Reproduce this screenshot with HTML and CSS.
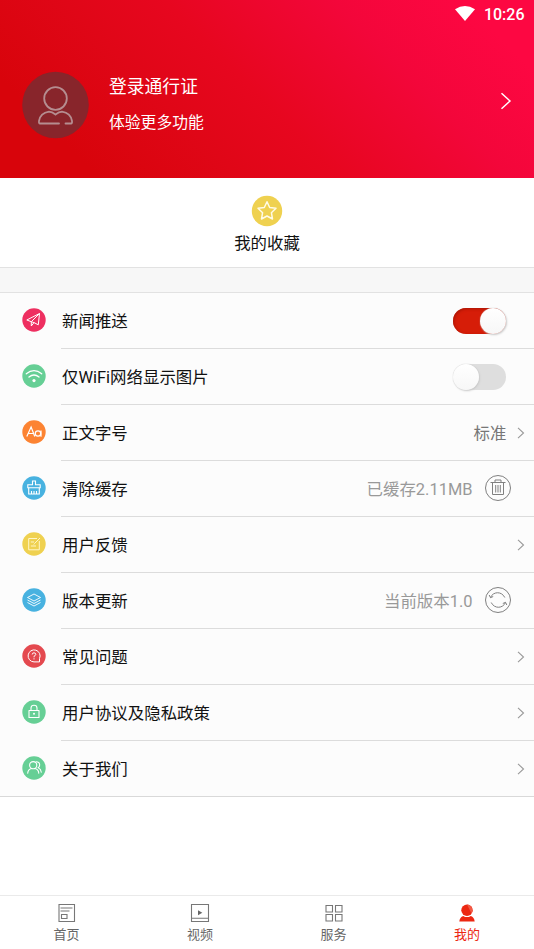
FILE: index.html
```html
<!DOCTYPE html>
<html lang="zh-CN">
<head>
<meta charset="utf-8">
<title>我的</title>
<link rel="stylesheet" href="styles.css">
</head>
<body>
<div class="app">
  <header class="hero">
    <div class="status">
      <svg class="wifi" width="20" height="15" viewBox="0 0 20 15"><path d="M0 3.3Q10-3.3 20 3.3L10 15Z" fill="#fff"/></svg>
      <span class="clock">10:26</span>
    </div>
    <div class="profile">
      <svg class="avatar" width="68" height="68" viewBox="0 0 68 68"><circle cx="33.500" cy="34" r="33.300" fill="#88252b"/><g fill="none" stroke="#b58d90" stroke-width="1.800" stroke-linecap="round"><circle cx="33.500" cy="27.500" r="11.300"/><path d="M37 52.500H18Q16.700 52.500 17 50C18 44 22 41.500 27 40.700Q30 40.700 33.500 43.500Q37 40.700 40 40.700C45 41.500 49 44 50 50Q50.300 52.500 49 52.500H43.500"/></g></svg>
      <div class="names">
        <div class="login">登录通行证</div>
        <div class="hint">体验更多功能</div>
      </div>
      <svg class="go" width="12" height="18" viewBox="0 0 12 18"><path d="M1.500 1.200L10 9L1.500 16.800" fill="none" stroke="#fff" stroke-width="1.500"/></svg>
    </div>
  </header>

  <section class="favorite">
    <svg width="32" height="32" viewBox="0 0 32 32"><circle cx="16" cy="16" r="15.200" fill="#efd150"/><path d="M16 6.800L18.700 12.500L25 13.300L20.400 17.700L21.500 24L16 21L10.500 24L11.600 17.700L7 13.300L13.300 12.500Z" fill="none" stroke="#fffbe6" stroke-width="1.500" stroke-linejoin="round"/></svg>
    <div>我的收藏</div>
  </section>
  <div class="gap"></div>

  <main class="list">
    <div class="row">
      <svg class="icon" viewBox="0 0 24 24"><circle cx="12" cy="12" r="11.700" fill="#ee2f60"/><path d="M17.500 5.500L4.800 12L9.300 13.700L17.500 5.500L16.300 16.800L12 14.600L9.300 13.700V18L12 14.600" fill="none" stroke="#fff" stroke-width="1" stroke-linejoin="round"/></svg>
      <div class="cell"><span class="label">新闻推送</span><span class="switch on"><i></i></span></div>
    </div>
    <div class="row">
      <svg class="icon" viewBox="0 0 24 24"><circle cx="12" cy="12" r="11.700" fill="#66cf95"/><path d="M4.300 9.800Q12 3.600 19.700 9.800M7 13.100Q12 8.800 17 13.100" fill="none" stroke="#fff" stroke-width="1.300" stroke-linecap="round"/><circle cx="12" cy="16.600" r="1.600" fill="#fff"/></svg>
      <div class="cell"><span class="label">仅WiFi网络显示图片</span><span class="switch"><i></i></span></div>
    </div>
    <div class="row">
      <svg class="icon" viewBox="0 0 24 24"><circle cx="12" cy="12" r="11.700" fill="#fc8332"/><g fill="none" stroke="#fff" stroke-width="1.200"><path d="M4.800 16.500L9.100 7L12.800 16.500M6.300 13.500H11.600"/><circle cx="16" cy="13.500" r="2.700"/><path d="M19 10.500V16.700"/></g></svg>
      <div class="cell"><span class="label">正文字号</span><span class="value dark">标准</span><svg class="arrow" viewBox="0 0 8 12"><path d="M1 .8L6.500 6L1 11.200"/></svg></div>
    </div>
    <div class="row">
      <svg class="icon" viewBox="0 0 24 24"><circle cx="12" cy="12" r="11.700" fill="#48b2e0"/><path d="M5.800 11.700V8.700H10.500V5H13.500V8.700H18.200V11.700ZM6.700 11.700V18H17.300V11.700M9.500 15V18M12 15V18M14.500 15V18" fill="none" stroke="#fff" stroke-width="1.100"/></svg>
      <div class="cell"><span class="label">清除缓存</span><span class="value">已缓存2.11MB</span>
      <svg class="action" viewBox="0 0 28 28"><circle cx="14" cy="14" r="12.500"/><path d="M6.500 8.500H21.500M11 8.300V6H17V8.300M8.500 8.500V20.500H19.500V8.500M11.700 11V18.500M14 11V18.500M16.300 11V18.500"/></svg></div>
    </div>
    <div class="row">
      <svg class="icon" viewBox="0 0 24 24"><circle cx="12" cy="12" r="11.700" fill="#efd150"/><path d="M15 6.500H6.700V17.800H17.300V9M8.800 10H12M8.800 14H14M12.500 11.500L18 6M12.500 11.500L11.800 12.500" fill="none" stroke="#fff6c8" stroke-width="1"/></svg>
      <div class="cell"><span class="label">用户反馈</span><svg class="arrow" viewBox="0 0 8 12"><path d="M1 .8L6.500 6L1 11.200"/></svg></div>
    </div>
    <div class="row">
      <svg class="icon" viewBox="0 0 24 24"><circle cx="12" cy="12" r="11.700" fill="#48b2e0"/><path d="M12 6L18.500 9.500L12 13L5.500 9.500ZM5.500 12L12 15.500L18.500 12M5.500 14.500L12 18L18.500 14.500" fill="none" stroke="#fff" stroke-width=".9" stroke-linejoin="round"/></svg>
      <div class="cell"><span class="label">版本更新</span><span class="value">当前版本1.0</span>
      <svg class="action" viewBox="0 0 28 28"><circle cx="14" cy="14" r="12.500"/><path d="M6.500 11.500C9 5.500 17.500 4.800 20.800 11.500M7.200 16.500C10.500 23.200 19 22.500 21.500 16.500M5.200 9L6.500 11.700L9.200 10.500M18.800 17.500L21.500 16.300L22.800 19"/></svg></div>
    </div>
    <div class="row">
      <svg class="icon" viewBox="0 0 24 24"><circle cx="12" cy="12" r="11.700" fill="#e4494f"/><g fill="none" stroke="#fff" stroke-width="1"><path d="M17.500 14.500A6 6 0 1 0 12 17.900H17.500V14.500"/><path d="M10.200 10.500Q10.300 8.800 12 8.800Q13.800 8.900 13.800 10.400Q13.700 11.400 12 12.300V13.300M12 14.300V15.400"/></g></svg>
      <div class="cell"><span class="label">常见问题</span><svg class="arrow" viewBox="0 0 8 12"><path d="M1 .8L6.500 6L1 11.200"/></svg></div>
    </div>
    <div class="row">
      <svg class="icon" viewBox="0 0 24 24"><circle cx="12" cy="12" r="11.700" fill="#66cf95"/><path d="M7 10.500H17V17.500H7ZM9 10.500V8Q9 5.200 12 5.200T15 8V10.500" fill="none" stroke="#fff" stroke-width="1.100" stroke-linejoin="round"/><circle cx="12" cy="13.800" r="1" fill="#fff"/></svg>
      <div class="cell"><span class="label">用户协议及隐私政策</span><svg class="arrow" viewBox="0 0 8 12"><path d="M1 .8L6.500 6L1 11.200"/></svg></div>
    </div>
    <div class="row">
      <svg class="icon" viewBox="0 0 24 24"><circle cx="12" cy="12" r="11.700" fill="#66cf95"/><g fill="none" stroke="#fff" stroke-width="1.100" stroke-linecap="round"><circle cx="11.200" cy="9.200" r="3.600"/><path d="M5.700 17.200Q6 13.300 9.400 12.500M13 12.500Q16.500 13.500 16.800 17.200M14 5.700Q17.500 5.500 17.700 9Q17.600 10.800 16.300 11.700Q19 13 19.300 16.300"/></g></svg>
      <div class="cell"><span class="label">关于我们</span><svg class="arrow" viewBox="0 0 8 12"><path d="M1 .8L6.500 6L1 11.200"/></svg></div>
    </div>
  </main>

  <nav class="tabs">
    <div class="tab"><svg viewBox="0 0 20 20"><path d="M2 1.500H17.500V18.500H2ZM3.500 5H15.500M3.500 8H12.500M4.500 11.500H10V15.500H4.500Z"/></svg><span>首页</span></div>
    <div class="tab"><svg viewBox="0 0 20 20"><path d="M1.500 1.500H18.500V18.500H1.500ZM1.500 15.200H18.500"/><path class="solid" d="M8 7.300L12.300 9.800L8 12.300Z"/></svg><span>视频</span></div>
    <div class="tab"><svg viewBox="0 0 20 20"><path d="M2 2.500H8.500V9H2ZM11.500 2.500H18V9H11.500ZM2 11.500H8.500V18H2ZM11.500 11.500H18V18H11.500Z"/></svg><span>服务</span></div>
    <div class="tab active"><svg viewBox="0 0 20 20"><g stroke="none"><circle cx="10" cy="7.300" r="5.700" fill="#ec2712"/><path d="M10 1.600A5.700 5.700 0 0 1 14.500 10.500Z" fill="#f25a45"/><path d="M2.300 18.600Q2.800 14 6.200 12.900Q10 15.300 13.800 12.900Q17.200 14 17.700 18.600Z" fill="#ec2712"/></g></svg><span>我的</span></div>
  </nav>
</div>
</body>
</html>
```
FILE: styles.css
```css
* { box-sizing: border-box; }
body {
  margin: 0;
  background: #fff;
  color: #111;
  font-family: Roboto, "Noto Sans CJK SC", sans-serif;
}
svg { display: block; flex: none; }
.app { height: 949px; display: flex; flex-direction: column; }

.hero {
  height: 178px;
  color: #fff;
  background: linear-gradient(45deg, #d8040b 14%, #df0616 32%, #e7061f 48%, #f3063a 72%, #fd0742 90%);
}
.status {
  height: 28px;
  display: flex;
  justify-content: flex-end;
  padding: 6px 9.5px 0 0;
  gap: 9px;
}
.clock { font-size: 16px; font-weight: 500; line-height: 18px; }
.profile { display: flex; align-items: flex-start; padding: 43px 22px 0; }
.names { flex: 1; margin-left: 19px; padding-top: 1px; }
.login { font-size: 17.8px; line-height: 30px; }
.hint { font-size: 15.8px; line-height: 24px; margin-top: 9px; }
.go { margin-top: 21px; }

.favorite {
  height: 90px;
  padding-top: 17px;
  display: flex;
  flex-direction: column;
  align-items: center;
  gap: 5px;
  font-size: 16.4px;
  line-height: 24px;
  border-bottom: 1px solid #e2e2e2;
}
.gap { height: 25px; background: #f7f7f7; border-bottom: 1px solid #e2e2e2; }

.list { background: #fcfcfc; border-bottom: 1px solid #d9d9d9; }
.row { height: 56px; display: flex; padding-left: 22px; }
.row:last-child { height: 55px; }
.icon { width: 24px; height: 24px; margin-top: 15px; }
.cell {
  flex: 1;
  display: flex;
  align-items: center;
  margin-left: 15px;
  padding: 0 9.5px 0 1px;
  border-bottom: 1px solid #dcdcdc;
}
.row:last-child .cell { border-bottom: 0; }
.label { flex: 1; font-size: 16.45px; line-height: 24px; padding-top: 2px; }
.value { font-size: 16.45px; line-height: 24px; padding-top: 2px; color: #999; }
.dark { color: #777; }
.arrow { width: 8px; height: 12px; margin-left: 10px; fill: none; stroke: #999; stroke-width: 1.1; }
.action { width: 28px; height: 28px; margin: 0 13px 1px 11px; fill: none; stroke: #808080; stroke-width: 1; }

.switch {
  width: 53px;
  height: 26px;
  margin: 0 18.5px 0 0;
  display: flex;
  border-radius: 13px;
  background: #dedede;
}
.switch i {
  width: 26px;
  height: 26px;
  border-radius: 50%;
  background: linear-gradient(#fff, #f7f7f7);
  box-shadow: 0 0 1px #bbb, 1px 1px 2px #ccc;
}
.on { justify-content: flex-end; background: #d61d08; box-shadow: inset 1px 1px 3px #a91505; }

.tabs {
  height: 54px;
  margin-top: auto;
  display: flex;
  border-top: 1px solid #eaeaea;
}
.tab {
  flex: 1;
  display: flex;
  flex-direction: column;
  align-items: center;
  padding: 7px .5px 0 0;
  color: #666;
  font-size: 13px;
  line-height: 20px;
}
.tab svg { width: 20px; height: 20px; margin-bottom: 2px; fill: none; stroke: #777; stroke-width: 1.1; }
.tab .solid { fill: #666; stroke: none; }
.tab.active { color: #ec2712; }
```
